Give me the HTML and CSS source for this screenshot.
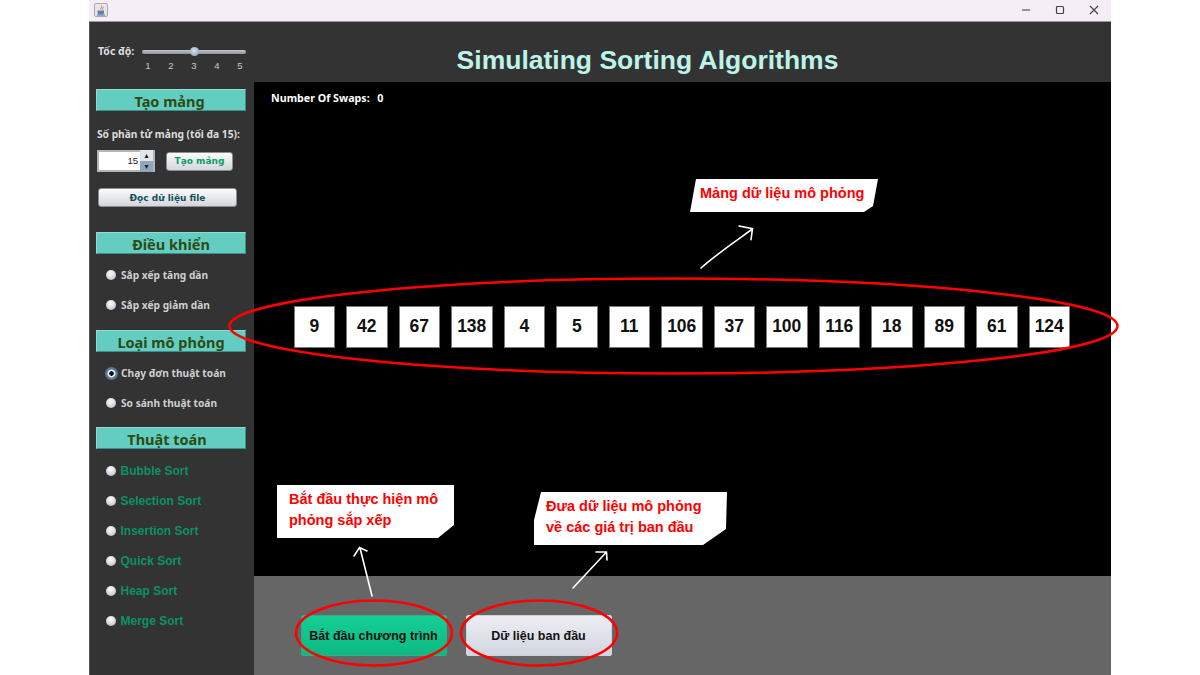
FILE: index.html
```html
<!DOCTYPE html>
<html lang="vi">
<head>
<meta charset="utf-8">
<title>Simulating Sorting Algorithms</title>
<link rel="stylesheet" href="styles.css">
</head>
<body>
<div class="stage">
  <div class="window">
    <div class="titlebar">
      <svg class="app-icon" width="14" height="14" viewBox="0 0 14 14">
        <rect x="0.5" y="0.5" width="13" height="13" rx="1.5" fill="#e9e6ea" stroke="#a9a9b2"/>
        <path d="M7.5 2.5c1.5 1.5-1.8 2.4-.4 4M9 3.8c.8 1-1 1.600-.2 2.700" fill="none" stroke="#d9772c" stroke-width="1"/>
        <path d="M3.500 7.500h6.500v2.200c0 1.200-1 1.600-2 1.600H5.500c-1 0-2-.4-2-1.600z" fill="#5b82a8"/>
        <path d="M3 12h8" stroke="#46698c"/>
      </svg>
      <div class="controls">
        <svg width="10" height="10" viewBox="0 0 10 10"><path d="M1 5h8" stroke="#555" stroke-width="1.200"/></svg>
        <svg width="10" height="10" viewBox="0 0 10 10"><rect x="1.500" y="1.500" width="7" height="7" rx="1" fill="none" stroke="#444" stroke-width="1.200"/></svg>
        <svg width="10" height="10" viewBox="0 0 10 10"><path d="M1 1l8 8M9 1l-8 8" stroke="#444" stroke-width="1.100"/></svg>
      </div>
    </div>
    <div class="content">
      <aside class="sidebar">
        <div class="speed">
          <span class="speed-label">Tốc độ:</span>
          <div class="slider">
            <div class="track"><span class="thumb"></span></div>
            <div class="ticks"><span>1</span><span>2</span><span>3</span><span>4</span><span>5</span></div>
          </div>
        </div>
        <h2 class="section-title title-create">Tạo mảng</h2>
        <div class="create">
          <p class="size-label">Số phần tử mảng (tối đa 15):</p>
          <div class="size-row">
            <div class="spinner">
              <span class="spinner-value">15</span>
              <span class="spinner-arrows"><i>▴</i><i>▾</i></span>
            </div>
            <button class="small-btn create-btn">Tạo mảng</button>
          </div>
          <button class="small-btn file-btn">Đọc dữ liệu file</button>
        </div>
        <h2 class="section-title">Điều khiển</h2>
        <label class="radio"><span class="dot"></span>Sắp xếp tăng dần</label>
        <label class="radio"><span class="dot"></span>Sắp xếp giảm dần</label>
        <h2 class="section-title gap-a">Loại mô phỏng</h2>
        <label class="radio"><span class="dot checked"></span>Chạy đơn thuật toán</label>
        <label class="radio"><span class="dot"></span>So sánh thuật toán</label>
        <h2 class="section-title gap-b">Thuật toán</h2>
        <label class="radio algo"><span class="dot"></span>Bubble Sort</label>
        <label class="radio algo"><span class="dot"></span>Selection Sort</label>
        <label class="radio algo"><span class="dot"></span>Insertion Sort</label>
        <label class="radio algo"><span class="dot"></span>Quick Sort</label>
        <label class="radio algo"><span class="dot"></span>Heap Sort</label>
        <label class="radio algo"><span class="dot"></span>Merge Sort</label>
      </aside>
      <main class="main">
        <header class="header"><h1>Simulating Sorting Algorithms</h1></header>
        <section class="canvas">
          <p class="swaps"><span>Number Of Swaps:</span><span>0</span></p>
          <div class="cells">
            <div class="cell">9</div><div class="cell">42</div><div class="cell">67</div><div class="cell">138</div><div class="cell">4</div><div class="cell">5</div><div class="cell">11</div><div class="cell">106</div><div class="cell">37</div><div class="cell">100</div><div class="cell">116</div><div class="cell">18</div><div class="cell">89</div><div class="cell">61</div><div class="cell">124</div>
          </div>
        </section>
        <footer class="footer">
          <button class="big-btn start">Bắt đầu chương trình</button>
          <button class="big-btn reset">Dữ liệu ban đầu</button>
        </footer>
      </main>
    </div>
  </div>

  <div class="note note-array">Mảng dữ liệu mô phỏng</div>
  <div class="note note-start">Bắt đầu thực hiện mô<br>phỏng sắp xếp</div>
  <div class="note note-reset">Đưa dữ liệu mô phỏng<br>về các giá trị ban đầu</div>

  <svg class="marks" width="1200" height="675" viewBox="0 0 1200 675">
    <g fill="none" stroke="#f00" stroke-width="2.500">
      <ellipse cx="673.500" cy="326" rx="444" ry="47.500"/>
      <ellipse cx="374" cy="633" rx="78" ry="32.500"/>
      <ellipse cx="539" cy="633" rx="78" ry="32.500"/>
    </g>
    <g fill="none" stroke="#fff" stroke-width="1.600" stroke-linecap="round">
      <path d="M701 268C718 253 736 241 752.500 229M739 226l13.500 2.700-1.500 11"/>
      <path d="M372 596L360 548M354 556l5.500-8.500 7.500 3.500"/>
      <path d="M573 588L606.500 552M596 552l10.500 0 .5 8"/>
    </g>
  </svg>
</div>
</body>
</html>
```
FILE: styles.css
```css
* { box-sizing: border-box; }
html, body { margin: 0; padding: 0; background: #fff; overflow: hidden; }
.stage { position: relative; width: 1200px; height: 675px; overflow: hidden; background: #fff; font-family: "Liberation Sans", Arial, sans-serif; }
.window { width: 1022px; height: 675px; margin-left: 89px; display: flex; flex-direction: column; background: #333; }

.titlebar { height: 22px; flex: none; display: flex; align-items: center; justify-content: space-between; background: #f5eef7; border-bottom: 1px solid #9a979b; padding: 0 12px 0 5px; }
.app-icon { display: block; margin-bottom: 2px; }
.controls { display: flex; gap: 24px; margin-bottom: 1px; }
.controls svg { display: block; }

.content { flex: 1; display: flex; min-height: 0; }
.sidebar { width: 165px; flex: none; padding-left: 6px; padding-right: 8px; background: #333; border-left: 1px solid #555; }
.speed { height: 67px; padding-top: 21px; display: flex; align-items: flex-start; }
.speed-label { font: bold 10.500px "Noto Sans", sans-serif; color: #ddd; margin-left: 2px; width: 44px; line-height: 16px; }
.slider { width: 105px; }
.track { position: relative; height: 4px; margin-top: 6.500px; border-radius: 2px; background: linear-gradient(#c4c6cc, #8f919b); }
.thumb { position: absolute; left: 48.500px; top: -3px; width: 9px; height: 9px; border-radius: 50%; background: radial-gradient(circle at 45% 40%, #d4e2ee, #7f9ab4); }
.ticks { display: flex; justify-content: space-between; padding: 0 3.500px; margin-top: 6px; font: 9.500px "Liberation Sans", sans-serif; color: #c9c9c9; }

.section-title { height: 22px; margin: 0 0 6px; width: 150px; text-align: center; font: bold 14.500px/22px "Noto Sans", sans-serif; color: #2f4a12; background: #63cdc2; border: 1px solid #8fdcd4; border-right-color: #3f8f88; border-bottom-color: #3f8f88; }
.title-create { padding-right: 3px; }
.gap-a { margin-top: 10px; }
.gap-b { margin-top: 9px; margin-bottom: 7px; padding-right: 8px; }

.create { height: 121px; margin-top: -6px; padding-top: 16px; }
.size-label { margin: 0 0 0 1px; font: bold 10.200px/14px "Noto Sans", sans-serif; color: #ddd; white-space: nowrap; }
.size-row { display: flex; align-items: center; margin-top: 9px; padding-left: 1px; }
.spinner { display: flex; width: 58px; height: 22px; background: #fff; border: 2px solid #b5b5b5; }
.spinner-value { flex: 1; text-align: right; padding-right: 2px; font: 9.500px/18px "Liberation Sans", sans-serif; color: #222; }
.spinner-arrows { width: 13px; margin: -2px 0; display: flex; flex-direction: column; background: linear-gradient(#dfe6ee 50%, #8fa6bf 50%); }
.spinner-arrows i { height: 11px; font: 8px/11px "DejaVu Sans", sans-serif; text-align: center; color: #222; }
.small-btn { padding: 0; border: 1px solid #8d8d8d; border-radius: 3px; background: linear-gradient(#fbfbfc, #d3d6dc); font: bold 9px "DejaVu Sans", sans-serif; }
.create-btn { width: 67px; height: 19px; margin-left: 11px; color: #0f9a6c; }
.file-btn { display: block; width: 139px; height: 19px; margin: 16px 0 0 2px; color: #14505c; }

.radio { display: flex; align-items: center; height: 30px; padding-left: 10px; font: bold 10.200px "Noto Sans", sans-serif; color: #cfcfcf; white-space: nowrap; }
.dot { flex: none; width: 10px; height: 10px; margin-right: 5px; border-radius: 50%; background: radial-gradient(circle at 45% 35%, #fff, #c9cbd6 70%, #8d8d99); }
.dot.checked { width: 13px; height: 13px; margin: 0 3.500px 0 -1.500px; background: radial-gradient(circle, #111 0 2px, #e8edf3 2.500px 3.500px, #55779c 4.500px); }
.algo { font: bold 12px/31px "Liberation Sans", sans-serif; color: #0b9264; }
.algo .dot { margin-right: 4.500px; }

.main { flex: 1; min-width: 0; display: flex; flex-direction: column; }
.header { height: 60px; flex: none; display: flex; align-items: center; justify-content: center; padding-top: 16px; padding-right: 70px; background: #333; }
.header h1 { margin: 0; font: bold 26.500px "Liberation Sans", sans-serif; color: #bdf3e9; }
.canvas { height: 494px; flex: none; background: #000; padding: 10px 0 0 17px; }
.swaps { margin: 0; height: 13px; display: flex; gap: 7.500px; font: bold 10.700px/13px "Noto Sans", sans-serif; color: #fff; }
.cells { display: flex; gap: 11px; margin: 201px 0 0 22.500px; }
.cell { width: 41.500px; height: 41.500px; flex: none; display: flex; align-items: center; justify-content: center; background: #fff; border: 1px solid #777; font: bold 17.500px "Liberation Sans", sans-serif; color: #111; }
.footer { flex: 1; display: flex; align-items: flex-start; gap: 19px; padding: 39px 0 0 46.500px; background: #666; }
.big-btn { width: 146px; height: 41px; padding: 0; border: 1px solid #8a8a8a; border-radius: 2px; font: bold 12.500px "Liberation Sans", sans-serif; color: #111; }
.start { background: linear-gradient(#15cf95, #0eb883); border-color: #2fae87; }
.reset { background: linear-gradient(#eceef2, #d2d6e0); border-color: #cfd2da; }

.note { position: absolute; background: #fff; color: #f00; font-weight: bold; font-size: 14.500px; line-height: 20.500px; white-space: nowrap; }
.note-array { left: 690px; top: 179px; width: 188px; height: 33px; padding: 4px 0 0 10px; clip-path: polygon(6px 0, 188px 0, 183px 27px, 174px 33px, 0 33px); }
.note-start { left: 277px; top: 485px; width: 177px; height: 53px; padding: 4px 0 0 12px; clip-path: polygon(0 0, 177px 0, 177px 40px, 161px 53px, 0 53px); }
.note-reset { left: 534px; top: 492px; width: 193px; height: 53px; padding: 4px 0 0 12px; clip-path: polygon(7px 0, 193px 0, 192px 37px, 169px 53px, 0 53px, 0 28px); }
.marks { position: absolute; left: 0; top: 0; pointer-events: none; }
```
